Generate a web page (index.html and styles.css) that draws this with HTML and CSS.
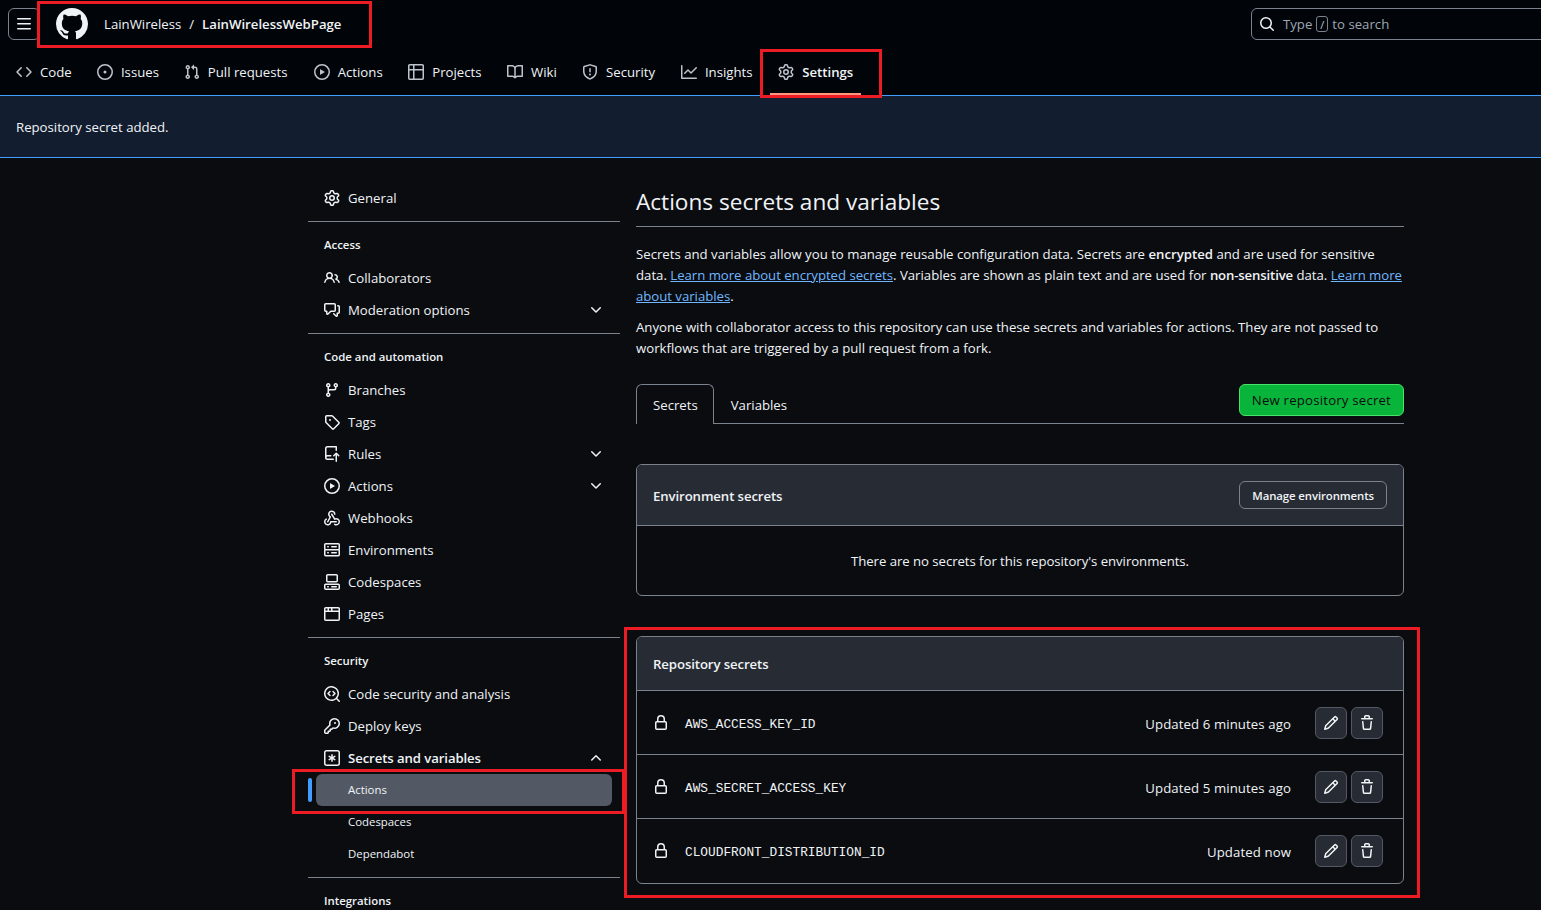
FILE: index.html
```html
<!DOCTYPE html>
<html lang="en">
<head>
<meta charset="utf-8">
<title>Actions secrets and variables</title>
<link rel="stylesheet" href="styles.css">
</head>
<body>
<svg class="sprite" xmlns="http://www.w3.org/2000/svg">
<symbol id="i-github" viewBox="0 0 16 16"><path d="M8 0c4.42 0 8 3.58 8 8a8.013 8.013 0 0 1-5.45 7.59c-.4.08-.55-.17-.55-.38 0-.27.01-1.13.01-2.2 0-.75-.25-1.23-.54-1.48 1.78-.2 3.65-.88 3.65-3.95 0-.88-.31-1.59-.82-2.15.08-.2.36-1.02-.08-2.12 0 0-.67-.22-2.2.82-.64-.18-1.32-.27-2-.27-.68 0-1.36.09-2 .27-1.53-1.03-2.2-.82-2.2-.82-.44 1.1-.16 1.92-.08 2.12-.51.56-.82 1.28-.82 2.15 0 3.06 1.86 3.75 3.64 3.95-.23.2-.44.55-.51 1.07-.46.21-1.61.55-2.33-.66-.15-.24-.6-.83-1.23-.82-.67.01-.27.38.01.53.34.19.73.9.82 1.13.16.45.68 1.31 2.69.94 0 .67.01 1.3.01 1.49 0 .21-.15.45-.55.38A7.995 7.995 0 0 1 0 8c0-4.42 3.58-8 8-8Z"/></symbol>
<symbol id="i-bars" viewBox="0 0 16 16"><path d="M1 2.75A.75.75 0 0 1 1.75 2h12.5a.75.75 0 0 1 0 1.5H1.75A.75.75 0 0 1 1 2.75Zm0 5A.75.75 0 0 1 1.75 7h12.5a.75.75 0 0 1 0 1.5H1.75A.75.75 0 0 1 1 7.75ZM1.75 12h12.5a.75.75 0 0 1 0 1.5H1.75a.75.75 0 0 1 0-1.5Z"/></symbol>
<symbol id="i-code" viewBox="0 0 16 16"><path d="m11.28 3.22 4.25 4.25a.75.75 0 0 1 0 1.06l-4.25 4.25a.749.749 0 0 1-1.275-.326.749.749 0 0 1 .215-.734L13.94 8l-3.72-3.72a.749.749 0 0 1 .326-1.275.749.749 0 0 1 .734.215Zm-6.56 0a.751.751 0 0 1 1.042.018.751.751 0 0 1 .018 1.042L2.06 8l3.72 3.72a.749.749 0 0 1-.326 1.275.749.749 0 0 1-.734-.215L.47 8.53a.75.75 0 0 1 0-1.06Z"/></symbol>
<symbol id="i-issue" viewBox="0 0 16 16"><path d="M8 9.5a1.5 1.5 0 1 0 0-3 1.5 1.5 0 0 0 0 3Z"/><path d="M8 0a8 8 0 1 1 0 16A8 8 0 0 1 8 0ZM1.5 8a6.5 6.5 0 1 0 13 0 6.5 6.5 0 0 0-13 0Z"/></symbol>
<symbol id="i-pr" viewBox="0 0 16 16"><path d="M1.5 3.25a2.25 2.25 0 1 1 3 2.122v5.256a2.251 2.251 0 1 1-1.5 0V5.372A2.25 2.25 0 0 1 1.5 3.25Zm5.677-.177L9.573.677A.25.25 0 0 1 10 .854V2.5h1A2.5 2.5 0 0 1 13.5 5v5.628a2.251 2.251 0 1 1-1.5 0V5a1 1 0 0 0-1-1h-1v1.646a.25.25 0 0 1-.427.177L7.177 3.427a.25.25 0 0 1 0-.354ZM3.75 2.5a.75.75 0 1 0 0 1.5.75.75 0 0 0 0-1.5Zm0 9.5a.75.75 0 1 0 0 1.5.75.75 0 0 0 0-1.5Zm8.25.75a.75.75 0 1 0 1.5 0 .75.75 0 0 0-1.5 0Z"/></symbol>
<symbol id="i-play" viewBox="0 0 16 16"><path d="M8 0a8 8 0 1 1 0 16A8 8 0 0 1 8 0ZM1.5 8a6.5 6.5 0 1 0 13 0 6.5 6.5 0 0 0-13 0Zm4.879-2.773 4.264 2.559a.25.25 0 0 1 0 .428l-4.264 2.559A.25.25 0 0 1 6 10.559V5.442a.25.25 0 0 1 .379-.215Z"/></symbol>
<symbol id="i-table" viewBox="0 0 16 16"><path d="M0 1.75C0 .784.784 0 1.75 0h12.5C15.216 0 16 .784 16 1.75v12.5A1.75 1.75 0 0 1 14.25 16H1.75A1.75 1.75 0 0 1 0 14.25ZM6.5 6.5v8h7.75a.25.25 0 0 0 .25-.25V6.5Zm8-1.5V1.75a.25.25 0 0 0-.25-.25H6.5V5Zm-13 1.5v7.75c0 .138.112.25.25.25H5v-8ZM5 5V1.5H1.75a.25.25 0 0 0-.25.25V5Z"/></symbol>
<symbol id="i-book" viewBox="0 0 16 16"><path d="M0 1.75A.75.75 0 0 1 .75 1h4.253c1.227 0 2.317.59 3 1.501A3.743 3.743 0 0 1 11.006 1h4.245a.75.75 0 0 1 .75.75v10.5a.75.75 0 0 1-.75.75h-4.507a2.25 2.25 0 0 0-1.591.659l-.622.621a.75.75 0 0 1-1.06 0l-.622-.621A2.25 2.25 0 0 0 5.258 13H.75a.75.75 0 0 1-.75-.75Zm7.251 10.324.004-5.073-.002-2.253A2.25 2.25 0 0 0 5.003 2.5H1.5v9h3.757a3.75 3.75 0 0 1 1.994.574ZM8.755 4.75l-.004 7.322a3.752 3.752 0 0 1 1.992-.572H14.5v-9h-3.495a2.25 2.25 0 0 0-2.25 2.25Z"/></symbol>
<symbol id="i-shield" viewBox="0 0 16 16"><path d="M7.467.133a1.748 1.748 0 0 1 1.066 0l5.25 1.68A1.75 1.75 0 0 1 15 3.48V7c0 1.566-.32 3.182-1.303 4.682-.983 1.498-2.585 2.813-5.032 3.855a1.697 1.697 0 0 1-1.33 0c-2.447-1.042-4.049-2.357-5.032-3.855C1.32 10.182 1 8.566 1 7V3.48a1.75 1.75 0 0 1 1.217-1.667Zm.61 1.429a.25.25 0 0 0-.153 0l-5.25 1.68a.25.25 0 0 0-.174.238V7c0 1.358.275 2.666 1.057 3.86.784 1.194 2.121 2.34 4.366 3.297a.196.196 0 0 0 .154 0c2.245-.956 3.582-2.104 4.366-3.298C13.225 9.666 13.5 8.36 13.5 7V3.48a.251.251 0 0 0-.174-.237l-5.25-1.68ZM8.75 4.75v3a.75.75 0 0 1-1.5 0v-3a.75.75 0 0 1 1.5 0ZM9 10.5a1 1 0 1 1-2 0 1 1 0 0 1 2 0Z"/></symbol>
<symbol id="i-graph" viewBox="0 0 16 16"><path d="M1.5 1.75V13.5h13.75a.75.75 0 0 1 0 1.5H.75a.75.75 0 0 1-.75-.75V1.75a.75.75 0 0 1 1.5 0Zm14.28 2.53-5.25 5.25a.75.75 0 0 1-1.06 0L7 7.06 4.28 9.78a.751.751 0 0 1-1.042-.018.751.751 0 0 1-.018-1.042l3.25-3.25a.75.75 0 0 1 1.06 0L10 7.94l4.72-4.72a.751.751 0 0 1 1.042.018.751.751 0 0 1 .018 1.042Z"/></symbol>
<symbol id="i-gear" viewBox="0 0 16 16"><path d="M8 0a8.2 8.2 0 0 1 .701.031C9.444.095 9.99.645 10.16 1.29l.288 1.107c.018.066.079.158.212.224.231.114.454.243.668.386.123.082.233.09.299.071l1.103-.303c.644-.176 1.392.021 1.82.63.27.385.506.792.704 1.218.315.675.111 1.422-.364 1.891l-.814.806c-.049.048-.098.147-.088.294.016.257.016.515 0 .772-.01.147.038.246.088.294l.814.806c.475.469.679 1.216.364 1.891a7.977 7.977 0 0 1-.704 1.217c-.428.61-1.176.807-1.82.63l-1.102-.302c-.067-.019-.177-.011-.3.071a5.909 5.909 0 0 1-.668.386c-.133.066-.194.158-.211.224l-.29 1.106c-.168.646-.715 1.196-1.458 1.26a8.006 8.006 0 0 1-1.402 0c-.743-.064-1.289-.614-1.458-1.26l-.289-1.106c-.018-.066-.079-.158-.212-.224a5.738 5.738 0 0 1-.668-.386c-.123-.082-.233-.09-.299-.071l-1.103.303c-.644.176-1.392-.021-1.82-.63a8.12 8.12 0 0 1-.704-1.218c-.315-.675-.111-1.422.363-1.891l.815-.806c.05-.048.098-.147.088-.294a6.214 6.214 0 0 1 0-.772c.01-.147-.038-.246-.088-.294l-.815-.806C.635 6.045.431 5.298.746 4.623a7.92 7.92 0 0 1 .704-1.217c.428-.61 1.176-.807 1.82-.63l1.102.302c.067.019.177.011.3-.071.214-.143.437-.272.668-.386.133-.066.194-.158.211-.224l.29-1.106C6.009.645 6.556.095 7.299.03 7.53.01 7.764 0 8 0Zm-.571 1.525c-.036.003-.108.036-.137.146l-.289 1.105c-.147.561-.549.967-.998 1.189-.173.086-.34.183-.5.29-.417.278-.97.423-1.529.27l-1.103-.303c-.109-.03-.175.016-.195.045-.22.312-.412.644-.573.99-.014.031-.021.11.059.19l.815.806c.411.406.562.957.53 1.456a4.709 4.709 0 0 0 0 .582c.032.499-.119 1.05-.53 1.456l-.815.806c-.081.08-.073.159-.059.19.162.346.353.677.573.989.02.03.085.076.195.046l1.102-.303c.56-.153 1.113-.008 1.53.27.161.107.328.204.501.29.447.222.85.629.997 1.189l.289 1.105c.029.109.101.143.137.146a6.6 6.6 0 0 0 1.142 0c.036-.003.108-.036.137-.146l.289-1.105c.147-.561.549-.967.998-1.189.173-.086.34-.183.5-.29.417-.278.97-.423 1.529-.27l1.103.303c.109.029.175-.016.195-.045.22-.313.411-.644.573-.99.014-.031.021-.11-.059-.19l-.815-.806c-.411-.406-.562-.957-.53-1.456a4.709 4.709 0 0 0 0-.582c-.032-.499.119-1.05.53-1.456l.815-.806c.081-.08.073-.159.059-.19a6.464 6.464 0 0 0-.573-.989c-.02-.03-.085-.076-.195-.046l-1.102.303c-.56.153-1.113.008-1.53-.27a4.44 4.44 0 0 0-.501-.29c-.447-.222-.85-.629-.997-1.189l-.289-1.105c-.029-.11-.101-.143-.137-.146a6.6 6.6 0 0 0-1.142 0ZM11 8a3 3 0 1 1-6 0 3 3 0 0 1 6 0ZM9.5 8a1.5 1.5 0 1 0-3.001.001A1.5 1.5 0 0 0 9.5 8Z"/></symbol>
<symbol id="i-search" viewBox="0 0 16 16"><path d="M10.68 11.74a6 6 0 0 1-7.922-8.982 6 6 0 0 1 8.982 7.922l3.04 3.04a.749.749 0 0 1-.326 1.275.749.749 0 0 1-.734-.215ZM11.5 7a4.499 4.499 0 1 0-8.997 0A4.499 4.499 0 0 0 11.5 7Z"/></symbol>
<symbol id="i-people" viewBox="0 0 16 16"><path d="M2 5.5a3.5 3.5 0 1 1 5.898 2.549 5.508 5.508 0 0 1 3.034 4.084.75.75 0 1 1-1.482.235 4 4 0 0 0-7.9 0 .75.75 0 0 1-1.482-.236A5.507 5.507 0 0 1 3.102 8.05 3.493 3.493 0 0 1 2 5.5ZM11 4a3.001 3.001 0 0 1 2.22 5.018 5.01 5.01 0 0 1 2.56 3.012.749.749 0 0 1-.885.954.752.752 0 0 1-.549-.514 3.507 3.507 0 0 0-2.522-2.372.75.75 0 0 1-.574-.73v-.352a.75.75 0 0 1 .416-.672A1.5 1.5 0 0 0 11 5.5.75.75 0 0 1 11 4Zm-5.5-.5a2 2 0 1 0-.001 3.999A2 2 0 0 0 5.5 3.5Z"/></symbol>
<symbol id="i-comment" viewBox="0 0 16 16"><path d="M1.75 1h8.5c.966 0 1.75.784 1.75 1.75v5.5A1.75 1.75 0 0 1 10.25 10H7.061l-2.574 2.573A1.458 1.458 0 0 1 2 11.543V10h-.25A1.75 1.75 0 0 1 0 8.25v-5.5C0 1.784.784 1 1.75 1ZM1.5 2.75v5.5c0 .138.112.25.25.25h1a.75.75 0 0 1 .75.75v2.19l2.72-2.72a.749.749 0 0 1 .53-.22h3.5a.25.25 0 0 0 .25-.25v-5.5a.25.25 0 0 0-.25-.25h-8.5a.25.25 0 0 0-.25.25Zm13 2a.25.25 0 0 0-.25-.25h-.5a.75.75 0 0 1 0-1.5h.5c.966 0 1.75.784 1.75 1.75v5.5A1.75 1.75 0 0 1 14.25 12H14v1.543a1.458 1.458 0 0 1-2.487 1.03L9.22 12.28a.749.749 0 0 1 .326-1.275.749.749 0 0 1 .734.215l2.22 2.22v-2.19a.75.75 0 0 1 .75-.75h1a.25.25 0 0 0 .25-.25Z"/></symbol>
<symbol id="i-down" viewBox="0 0 16 16"><path d="M12.78 5.22a.749.749 0 0 1 0 1.06l-4.25 4.25a.749.749 0 0 1-1.06 0L3.22 6.28a.749.749 0 1 1 1.06-1.06L8 8.939l3.72-3.719a.749.749 0 0 1 1.06 0Z"/></symbol>
<symbol id="i-up" viewBox="0 0 16 16"><path d="M3.22 10.53a.749.749 0 0 1 0-1.06l4.25-4.25a.749.749 0 0 1 1.06 0l4.25 4.25a.749.749 0 1 1-1.06 1.06L8 6.811 4.28 10.53a.749.749 0 0 1-1.06 0Z"/></symbol>
<symbol id="i-branch" viewBox="0 0 16 16"><path d="M9.5 3.25a2.25 2.25 0 1 1 3 2.122V6A2.5 2.5 0 0 1 10 8.5H6a1 1 0 0 0-1 1v1.128a2.251 2.251 0 1 1-1.5 0V5.372a2.25 2.25 0 1 1 1.5 0v1.836A2.493 2.493 0 0 1 6 7h4a1 1 0 0 0 1-1v-.628A2.25 2.25 0 0 1 9.5 3.25Zm-6 0a.75.75 0 1 0 1.5 0 .75.75 0 0 0-1.5 0Zm8.25-.75a.75.75 0 1 0 0 1.5.75.75 0 0 0 0-1.5ZM4.25 12a.75.75 0 1 0 0 1.5.75.75 0 0 0 0-1.5Z"/></symbol>
<symbol id="i-tag" viewBox="0 0 16 16"><path d="M1 7.775V2.75C1 1.784 1.784 1 2.75 1h5.025c.464 0 .91.184 1.238.513l6.25 6.25a1.75 1.75 0 0 1 0 2.474l-5.026 5.026a1.75 1.75 0 0 1-2.474 0l-6.25-6.25A1.752 1.752 0 0 1 1 7.775Zm1.5 0c0 .066.026.13.073.177l6.25 6.25a.25.25 0 0 0 .354 0l5.025-5.025a.25.25 0 0 0 0-.354l-6.25-6.25a.25.25 0 0 0-.177-.073H2.75a.25.25 0 0 0-.25.25ZM6 5a1 1 0 1 1 0 2 1 1 0 0 1 0-2Z"/></symbol>
<symbol id="i-rules" viewBox="0 0 16 16"><path d="M1 2.5A2.5 2.5 0 0 1 3.5 0h8.75a.75.75 0 0 1 .75.75v3.5a.75.75 0 0 1-1.5 0V1.5h-8a1 1 0 0 0-1 1v6.708A2.493 2.493 0 0 1 3.5 9h3.25a.75.75 0 0 1 0 1.5H3.5a1 1 0 0 0 0 2h5.75a.75.75 0 0 1 0 1.5H3.5A2.5 2.5 0 0 1 1 11.5Zm13.23 7.79h-.001l-1.224-1.224v6.184a.75.75 0 0 1-1.5 0V9.066L10.28 10.29a.75.75 0 0 1-1.06-1.061l2.505-2.504a.75.75 0 0 1 1.06 0L15.29 9.23a.751.751 0 0 1-.018 1.042.751.751 0 0 1-1.042.018Z"/></symbol>
<symbol id="i-webhook" viewBox="0 0 16 16"><path d="M5.5 4.25a2.25 2.25 0 0 1 4.5 0 .75.75 0 0 0 1.5 0 3.75 3.75 0 1 0-6.14 2.889l-2.272 4.258a.75.75 0 0 0 1.324.706L7 7.25a.75.75 0 0 0-.309-1.015A2.25 2.25 0 0 1 5.5 4.25Z"/><path d="M7.364 3.607a.75.75 0 0 1 1.03.257l2.608 4.349a3.75 3.75 0 1 1-.628 6.785.75.75 0 0 1 .752-1.299 2.25 2.25 0 1 0-.033-3.88.75.75 0 0 1-1.03-.256L7.107 4.636a.75.75 0 0 1 .257-1.03Z"/><path d="M2.9 8.776A.75.75 0 0 1 2.625 9.8 2.25 2.25 0 1 0 6 11.75a.75.75 0 0 1 .75-.751h5.5a.75.75 0 0 1 0 1.5H7.425a3.751 3.751 0 1 1-5.55-3.998.75.75 0 0 1 1.024.274Z"/></symbol>
<symbol id="i-server" viewBox="0 0 16 16"><path d="M1.75 1h12.5c.966 0 1.75.784 1.75 1.75v4c0 .372-.116.717-.314 1 .198.283.314.628.314 1v4a1.75 1.75 0 0 1-1.75 1.75H1.75A1.75 1.75 0 0 1 0 12.75v-4c0-.358.109-.707.314-1a1.739 1.739 0 0 1-.314-1v-4C0 1.784.784 1 1.75 1ZM1.5 2.75v4c0 .138.112.25.25.25h12.5a.25.25 0 0 0 .25-.25v-4a.25.25 0 0 0-.25-.25H1.75a.25.25 0 0 0-.25.25Zm.25 5.75a.25.25 0 0 0-.25.25v4c0 .138.112.25.25.25h12.5a.25.25 0 0 0 .25-.25v-4a.25.25 0 0 0-.25-.25ZM7 4.75A.75.75 0 0 1 7.75 4h4.5a.75.75 0 0 1 0 1.5h-4.5A.75.75 0 0 1 7 4.75ZM7.75 10h4.5a.75.75 0 0 1 0 1.5h-4.5a.75.75 0 0 1 0-1.5ZM3 4.75A.75.75 0 0 1 3.75 4h.5a.75.75 0 0 1 0 1.5h-.5A.75.75 0 0 1 3 4.75ZM3.75 10h.5a.75.75 0 0 1 0 1.5h-.5a.75.75 0 0 1 0-1.5Z"/></symbol>
<symbol id="i-codespaces" viewBox="0 0 16 16"><path d="M0 11.25c0-.966.784-1.75 1.75-1.75h12.5c.966 0 1.75.784 1.75 1.75v3A1.75 1.75 0 0 1 14.25 16H1.75A1.75 1.75 0 0 1 0 14.25Zm2-9.5C2 .784 2.784 0 3.75 0h8.5C13.216 0 14 .784 14 1.75v5a1.75 1.75 0 0 1-1.75 1.75h-8.5A1.75 1.75 0 0 1 2 6.75Zm1.75-.25a.25.25 0 0 0-.25.25v5c0 .138.112.25.25.25h8.5a.25.25 0 0 0 .25-.25v-5a.25.25 0 0 0-.25-.25Zm-2 9.5a.25.25 0 0 0-.25.25v3c0 .138.112.25.25.25h12.5a.25.25 0 0 0 .25-.25v-3a.25.25 0 0 0-.25-.25Z"/><path d="M7 12.75a.75.75 0 0 1 .75-.75h4.5a.75.75 0 0 1 0 1.5h-4.5a.75.75 0 0 1-.75-.75Zm-4 0a.75.75 0 0 1 .75-.75h.5a.75.75 0 0 1 0 1.5h-.5a.75.75 0 0 1-.75-.75Z"/></symbol>
<symbol id="i-browser" viewBox="0 0 16 16"><path d="M0 2.75C0 1.784.784 1 1.75 1h12.5c.966 0 1.75.784 1.75 1.75v10.5A1.75 1.75 0 0 1 14.25 15H1.75A1.75 1.75 0 0 1 0 13.25ZM14.5 6h-13v7.25c0 .138.112.25.25.25h12.5a.25.25 0 0 0 .25-.25Zm-6-3.5v2h6V2.75a.25.25 0 0 0-.25-.25ZM5 2.5v2h2v-2Zm-3.25 0a.25.25 0 0 0-.25.25V4.5h2v-2Z"/></symbol>
<symbol id="i-codescan" viewBox="0 0 16 16"><path d="M8.47 4.97a.75.75 0 0 0 0 1.06L9.94 7.5 8.47 8.97a.75.75 0 1 0 1.06 1.06l2-2a.75.75 0 0 0 0-1.06l-2-2a.75.75 0 0 0-1.06 0ZM6.53 6.03a.75.75 0 0 0-1.06-1.06l-2 2a.75.75 0 0 0 0 1.06l2 2a.75.75 0 1 0 1.06-1.06L5.06 7.5l1.47-1.47Z"/><path d="M12.246 13.307a7.501 7.501 0 1 1 1.06-1.06l2.474 2.473a.749.749 0 0 1-.326 1.275.749.749 0 0 1-.734-.215ZM1.5 7.5a6.002 6.002 0 0 0 3.608 5.504 6.002 6.002 0 0 0 6.486-1.117.748.748 0 0 1 .292-.293A6 6 0 1 0 1.5 7.5Z"/></symbol>
<symbol id="i-key" viewBox="0 0 16 16"><path d="M10.5 0a5.499 5.499 0 1 1-1.288 10.848l-.932.932a.749.749 0 0 1-.53.22H7v.75a.749.749 0 0 1-.22.53l-.5.5a.749.749 0 0 1-.53.22H5v.75a.749.749 0 0 1-.22.53l-.5.5a.749.749 0 0 1-.53.22h-2A1.75 1.75 0 0 1 0 14.25v-2c0-.199.079-.389.22-.53l4.932-4.932A5.5 5.5 0 0 1 10.5 0Zm-4 5.5c-.001.431.069.86.205 1.269a.75.75 0 0 1-.181.768L1.5 12.56v1.69c0 .138.112.25.25.25h1.69l.06-.06v-1.19a.75.75 0 0 1 .75-.75h1.19l.06-.06v-1.19a.75.75 0 0 1 .75-.75h1.19l1.023-1.025a.75.75 0 0 1 .768-.18A4 4 0 1 0 6.5 5.5ZM11 6a1 1 0 1 1 0-2 1 1 0 0 1 0 2Z"/></symbol>
<symbol id="i-asterisk" viewBox="0 0 16 16"><path d="M0 2.75A2.75 2.75 0 0 1 2.75 0h10.5A2.75 2.75 0 0 1 16 2.75v10.5A2.75 2.75 0 0 1 13.25 16H2.75A2.75 2.75 0 0 1 0 13.25ZM2.75 1.5c-.69 0-1.25.56-1.25 1.25v10.5c0 .69.56 1.25 1.25 1.25h10.5c.69 0 1.25-.56 1.25-1.25V2.75c0-.69-.56-1.25-1.25-1.25Z"/><path d="M8 4a.75.75 0 0 1 .75.75V6.7l1.69-.975a.75.75 0 0 1 .75 1.3L9.5 8l1.69.976a.75.75 0 0 1-.75 1.298L8.75 9.3v1.951a.75.75 0 0 1-1.5 0V9.299l-1.69.976a.75.75 0 0 1-.75-1.3L6.5 8l-1.69-.975a.75.75 0 0 1 .75-1.3l1.69.976V4.75A.75.75 0 0 1 8 4Z"/></symbol>
<symbol id="i-lock" viewBox="0 0 16 16"><path d="M4 4a4 4 0 0 1 8 0v2h.25c.966 0 1.75.784 1.75 1.75v5.5A1.75 1.75 0 0 1 12.25 15h-8.5A1.75 1.75 0 0 1 2 13.25v-5.5C2 6.784 2.784 6 3.75 6H4Zm8.25 3.5h-8.5a.25.25 0 0 0-.25.25v5.5c0 .138.112.25.25.25h8.5a.25.25 0 0 0 .25-.25v-5.5a.25.25 0 0 0-.25-.25ZM10.5 6V4a2.5 2.5 0 1 0-5 0v2Z"/></symbol>
<symbol id="i-pencil" viewBox="0 0 16 16"><path d="M11.013 1.427a1.75 1.75 0 0 1 2.474 0l1.086 1.086a1.75 1.75 0 0 1 0 2.474l-8.61 8.61c-.21.21-.47.364-.756.445l-3.251.93a.75.75 0 0 1-.927-.928l.929-3.25c.081-.286.235-.547.445-.758l8.61-8.61Zm.176 4.823L9.75 4.81l-6.286 6.287a.253.253 0 0 0-.064.108l-.558 1.953 1.953-.558a.253.253 0 0 0 .108-.064Zm1.238-3.763a.25.25 0 0 0-.354 0L10.811 3.75l1.439 1.44 1.263-1.263a.25.25 0 0 0 0-.354Z"/></symbol>
<symbol id="i-trash" viewBox="0 0 16 16"><path d="M11 1.75V3h2.25a.75.75 0 0 1 0 1.5H2.75a.75.75 0 0 1 0-1.5H5V1.75C5 .784 5.784 0 6.75 0h2.5C10.216 0 11 .784 11 1.75ZM4.496 6.675l.66 6.6a.25.25 0 0 0 .249.225h5.19a.25.25 0 0 0 .249-.225l.66-6.6a.75.75 0 0 1 1.492.149l-.66 6.6A1.748 1.748 0 0 1 10.595 15h-5.19a1.75 1.75 0 0 1-1.741-1.575l-.66-6.6a.75.75 0 1 1 1.492-.15ZM6.5 1.75V3h3V1.75a.25.25 0 0 0-.25-.25h-2.5a.25.25 0 0 0-.25.25Z"/></symbol>
</svg>

<header class="app-header">
  <div class="top-row">
    <button class="menu-btn" type="button"><svg class="icon"><use href="#i-bars"/></svg></button>
    <svg class="logo"><use href="#i-github"/></svg>
    <div class="crumbs"><span>LainWireless</span><span class="crumb-sep">/</span><strong>LainWirelessWebPage</strong></div>
    <div class="search">
      <svg class="icon search-icon"><use href="#i-search"/></svg>
      <span>Type</span><kbd class="slash">/</kbd><span>to search</span>
    </div>
  </div>
  <nav class="repo-nav">
    <a class="nav-item"><svg class="icon"><use href="#i-code"/></svg><span class="nav-label" data-content="Code">Code</span></a>
    <a class="nav-item"><svg class="icon"><use href="#i-issue"/></svg><span class="nav-label" data-content="Issues">Issues</span></a>
    <a class="nav-item"><svg class="icon"><use href="#i-pr"/></svg><span class="nav-label" data-content="Pull requests">Pull requests</span></a>
    <a class="nav-item"><svg class="icon"><use href="#i-play"/></svg><span class="nav-label" data-content="Actions">Actions</span></a>
    <a class="nav-item"><svg class="icon"><use href="#i-table"/></svg><span class="nav-label" data-content="Projects">Projects</span></a>
    <a class="nav-item"><svg class="icon"><use href="#i-book"/></svg><span class="nav-label" data-content="Wiki">Wiki</span></a>
    <a class="nav-item"><svg class="icon"><use href="#i-shield"/></svg><span class="nav-label" data-content="Security">Security</span></a>
    <a class="nav-item"><svg class="icon"><use href="#i-graph"/></svg><span class="nav-label" data-content="Insights">Insights</span></a>
    <a class="nav-item is-current"><svg class="icon"><use href="#i-gear"/></svg><span class="nav-label" data-content="Settings">Settings</span></a>
  </nav>
</header>

<div class="flash">Repository secret added.</div>

<div class="layout">
  <aside class="sidebar">
    <a class="side-row"><svg class="icon"><use href="#i-gear"/></svg>General</a>
    <hr class="side-rule">
    <h3 class="side-head">Access</h3>
    <a class="side-row"><svg class="icon"><use href="#i-people"/></svg>Collaborators</a>
    <a class="side-row"><svg class="icon"><use href="#i-comment"/></svg>Moderation options<svg class="icon chevron"><use href="#i-down"/></svg></a>
    <hr class="side-rule">
    <h3 class="side-head">Code and automation</h3>
    <a class="side-row"><svg class="icon"><use href="#i-branch"/></svg>Branches</a>
    <a class="side-row"><svg class="icon"><use href="#i-tag"/></svg>Tags</a>
    <a class="side-row"><svg class="icon"><use href="#i-rules"/></svg>Rules<svg class="icon chevron"><use href="#i-down"/></svg></a>
    <a class="side-row"><svg class="icon"><use href="#i-play"/></svg>Actions<svg class="icon chevron"><use href="#i-down"/></svg></a>
    <a class="side-row"><svg class="icon"><use href="#i-webhook"/></svg>Webhooks</a>
    <a class="side-row"><svg class="icon"><use href="#i-server"/></svg>Environments</a>
    <a class="side-row"><svg class="icon"><use href="#i-codespaces"/></svg>Codespaces</a>
    <a class="side-row"><svg class="icon"><use href="#i-browser"/></svg>Pages</a>
    <hr class="side-rule">
    <h3 class="side-head">Security</h3>
    <a class="side-row"><svg class="icon"><use href="#i-codescan"/></svg>Code security and analysis</a>
    <a class="side-row"><svg class="icon"><use href="#i-key"/></svg>Deploy keys</a>
    <a class="side-row is-open"><svg class="icon"><use href="#i-asterisk"/></svg>Secrets and variables<svg class="icon chevron"><use href="#i-up"/></svg></a>
    <a class="side-sub is-active">Actions</a>
    <a class="side-sub">Codespaces</a>
    <a class="side-sub">Dependabot</a>
    <hr class="side-rule">
    <h3 class="side-head">Integrations</h3>
  </aside>

  <main class="content">
    <h1 class="page-title">Actions secrets and variables</h1>
    <p class="intro">Secrets and variables allow you to manage reusable configuration data. Secrets are <strong>encrypted</strong> and are used for sensitive data. <a class="link">Learn more about encrypted secrets</a>. Variables are shown as plain text and are used for <strong class="tight">non-sensitive</strong> data. <a class="link">Learn more about variables</a>.</p>
    <p class="intro second">Anyone with collaborator access to this repository can use these secrets and variables for actions. They are not passed to workflows that are triggered by a pull request from a fork.</p>

    <div class="tabs">
      <a class="tab is-selected">Secrets</a>
      <a class="tab">Variables</a>
      <button class="btn-new" type="button">New repository secret</button>
    </div>

    <section class="box">
      <div class="box-head env-head"><h2>Environment secrets</h2><button class="btn-small" type="button">Manage environments</button></div>
      <div class="box-empty">There are no secrets for this repository's environments.</div>
    </section>

    <section class="box">
      <div class="box-head repo-head"><h2>Repository secrets</h2></div>
      <div class="secret-row">
        <svg class="icon lock"><use href="#i-lock"/></svg><code>AWS_ACCESS_KEY_ID</code><span class="updated">Updated 6 minutes ago</span>
        <button class="icon-btn edit" type="button"><svg class="icon"><use href="#i-pencil"/></svg></button>
        <button class="icon-btn" type="button"><svg class="icon"><use href="#i-trash"/></svg></button>
      </div>
      <div class="secret-row">
        <svg class="icon lock"><use href="#i-lock"/></svg><code>AWS_SECRET_ACCESS_KEY</code><span class="updated">Updated 5 minutes ago</span>
        <button class="icon-btn edit" type="button"><svg class="icon"><use href="#i-pencil"/></svg></button>
        <button class="icon-btn" type="button"><svg class="icon"><use href="#i-trash"/></svg></button>
      </div>
      <div class="secret-row">
        <svg class="icon lock"><use href="#i-lock"/></svg><code>CLOUDFRONT_DISTRIBUTION_ID</code><span class="updated">Updated now</span>
        <button class="icon-btn edit" type="button"><svg class="icon"><use href="#i-pencil"/></svg></button>
        <button class="icon-btn" type="button"><svg class="icon"><use href="#i-trash"/></svg></button>
      </div>
    </section>
  </main>
</div>

<div class="mark mark-crumbs"></div>
<div class="mark mark-settings"></div>
<div class="mark mark-actions"></div>
<div class="mark mark-secrets"></div>
<div class="active-marker"></div>
</body>
</html>
```

FILE: styles.css
```css
* { box-sizing: border-box; }
html, body { margin: 0; height: 100%; overflow: hidden; }
body {
  position: relative;
  background: #0a0c10;
  color: #f0f3f6;
  font-family: "Open Sans", "Noto Sans", sans-serif;
  font-size: 13.2px;
  line-height: 21px;
}
.sprite { display: none; }
.icon { width: 16px; height: 16px; flex: none; fill: currentColor; display: block; }

/* Header */
.app-header { background: #010409; height: 95px; overflow: hidden; }
.top-row { display: flex; align-items: center; height: 48px; padding: 8px 0 8px 8px; }
.menu-btn {
  width: 32px; height: 32px; flex: none; padding: 0;
  display: flex; align-items: center; justify-content: center;
  background: transparent; color: #f0f3f6;
  border: 1px solid #7a828e; border-radius: 6px;
}
.logo { width: 32px; height: 32px; flex: none; margin-left: 16px; fill: #f0f3f6; }
.crumbs { margin-left: 16px; display: flex; align-items: center; }
.crumb-sep { margin: 0 8px; }
.crumbs strong { font-weight: 600; }
.search {
  margin-left: auto; margin-right: -40px; width: 330px; height: 32px; flex: none;
  display: flex; align-items: center; padding-left: 7px;
  border: 1px solid #7a828e; border-radius: 6px; color: #9ea7b3;
}
.search-icon { color: #f0f3f6; margin-right: 8px; }
.slash {
  width: 12px; height: 16px; margin: 0 4px;
  display: flex; align-items: center; justify-content: center;
  border: 1px solid #7a828e; border-radius: 3px;
  font: inherit; font-size: 11px; color: #bdc4cc;
}
.repo-nav { display: flex; height: 47px; padding-left: 8px; gap: 8px; }
.nav-item {
  position: relative; display: flex; align-items: center; gap: 8px;
  padding: 0 8px; color: #f0f3f6; white-space: nowrap;
}
.nav-item:first-child { margin-right: 1px; }
.nav-item .icon { color: #bdc4cc; }
.nav-label { display: block; padding-top: 2px; }
.nav-label::before {
  content: attr(data-content); display: block; height: 0; overflow: hidden;
  visibility: hidden; font-weight: 600; letter-spacing: -0.07px;
}
.nav-item.is-current { font-weight: 600; }
.nav-item.is-current::after {
  content: ""; position: absolute; left: 0; right: 0; bottom: 0; height: 2px; background: #ff967d;
}

/* Flash */
.flash {
  height: 63px; padding: 21px 16px 0;
  background: #121d2f;
  border-top: 1px solid #409eff; border-bottom: 1px solid #409eff;
}

/* Layout */
.layout { display: flex; gap: 16px; padding: 24px 0 0 308px; }
.sidebar { width: 312px; flex: none; }
.side-row {
  display: flex; align-items: center; gap: 8px; height: 32px; padding: 0 16px;
}
.side-row.is-open { font-weight: 600; letter-spacing: -0.1px; }
.chevron { margin-left: auto; margin-right: 0; }
.side-rule { height: 1px; margin: 7px 0 0; border: 0; background: #7a828e; }
.side-head {
  margin: 0; height: 40px; padding: 15px 16px 0;
  font-size: 11.4px; line-height: 16px; font-weight: 600;
}
.side-sub {
  display: flex; align-items: center; height: 32px;
  margin-left: 8px; margin-right: 8px; padding: 0 0 2px 32px;
  font-size: 11.4px; border-radius: 6px;
}
.side-sub.is-active { background: #525964; }
.active-marker {
  position: absolute; left: 308px; top: 778px; width: 4px; height: 24px;
  border-radius: 6px; background: #409eff;
}

/* Content */
.content { width: 768px; flex: none; }
.page-title {
  margin: 0; height: 45px; padding-top: 2px;
  border-bottom: 1px solid #7a828e;
  font-size: 22.6px; line-height: 36px; font-weight: 400;
}
.intro { margin: 17px 0 0; }
.intro.second { margin-top: 10px; }
.intro strong { font-weight: 600; }
.intro .tight { letter-spacing: -0.15px; }
.link { color: #71b7ff; text-decoration: underline; letter-spacing: -0.03px; }
.tabs {
  display: flex; align-items: flex-start; margin-top: 25px; height: 40px;
  border-bottom: 1px solid #7a828e;
}
.tab { height: 40px; padding: 10px 16px 0; border: 1px solid transparent; border-bottom: 0; }
.tab.is-selected {
  padding-right: 15px;
  background: #0a0c10; border-color: #7a828e; border-radius: 6px 6px 0 0;
}
.btn-new {
  margin-left: auto; height: 32px; padding: 0 12px;
  background: #09b43a; color: #0a0c10;
  border: 1px solid #4ae168; border-radius: 6px;
  font: inherit; font-weight: 500; letter-spacing: 0.2px;
}
.box { margin-top: 40px; border: 1px solid #7a828e; border-radius: 6px; overflow: hidden; }
.box-head {
  display: flex; align-items: center; justify-content: space-between;
  padding: 0 16px; background: #272b33; border-bottom: 1px solid #7a828e;
}
.box-head h2 { margin: 0; padding-top: 2px; font-size: 13.2px; font-weight: 600; letter-spacing: -0.1px; }
.env-head { height: 61px; }
.repo-head { height: 54px; }
.btn-small {
  height: 28px; padding: 0 12px;
  background: #272b33; color: #f0f3f6;
  border: 1px solid #7a828e; border-radius: 6px;
  font: inherit; font-size: 11.4px; font-weight: 600; letter-spacing: -0.1px;
}
.box-empty {
  height: 69px; padding-top: 2px;
  display: flex; align-items: center; justify-content: center;
  letter-spacing: -0.05px;
}
.secret-row {
  display: flex; align-items: center; height: 64px; padding: 0 20px 0 16px;
  border-bottom: 1px solid #7a828e;
}
.secret-row:last-child { border-bottom: 0; }
.lock { color: #f0f3f6; }
.secret-row code {
  margin: 4px 0 0 16px;
  font-family: "Liberation Mono", monospace; font-size: 12.8px;
}
.updated { margin: 4px 0 0 auto; letter-spacing: 0.1px; }
.secret-row:last-child code, .secret-row:last-child .updated { margin-top: 2px; }
.icon-btn {
  width: 32px; height: 32px; margin-left: 4px; padding: 0;
  display: flex; align-items: center; justify-content: center;
  background: #272b33; color: #f0f3f6;
  border: 1px solid #525964; border-radius: 6px;
}
.icon-btn.edit { margin-left: 24px; }

/* Annotation rectangles drawn over the screenshot */
.mark { position: absolute; border: 3px solid #ed1c24; pointer-events: none; }
.mark-crumbs { left: 37px; top: 1px; width: 335px; height: 47px; }
.mark-settings { left: 760px; top: 49px; width: 122px; height: 49px; }
.mark-actions { left: 292px; top: 769px; width: 333px; height: 45px; }
.mark-secrets { left: 624px; top: 627px; width: 796px; height: 271px; }
```
